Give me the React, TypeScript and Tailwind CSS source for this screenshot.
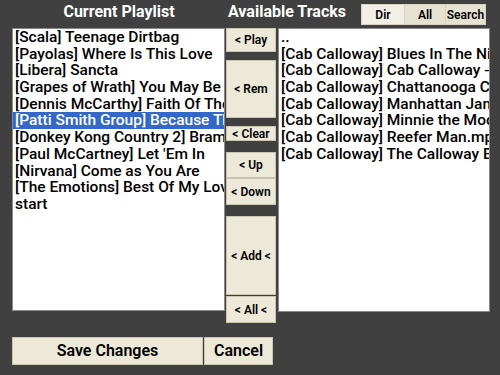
import React from "react";

const playlist = [
  "[Scala] Teenage Dirtbag",
  "[Payolas] Where Is This Love",
  "[Libera] Sancta",
  "[Grapes of Wrath] You May Be Wrong",
  "[Dennis McCarthy] Faith Of The Heart",
  "[Patti Smith Group] Because The Night",
  "[Donkey Kong Country 2] Bramble Blast",
  "[Paul McCartney] Let 'Em In",
  "[Nirvana] Come as You Are",
  "[The Emotions] Best Of My Love",
  "start",
];

const tracks = [
  "..",
  "[Cab Calloway] Blues In The Night",
  "[Cab Calloway] Cab Calloway - Jumpin Jive",
  "[Cab Calloway] Chattanooga Choo Choo",
  "[Cab Calloway] Manhattan Jam",
  "[Cab Calloway] Minnie the Moocher",
  "[Cab Calloway] Reefer Man.mp3",
  "[Cab Calloway] The Calloway Boogie",
];

const font = { fontFamily: 'Roboto, "DejaVu Sans", sans-serif' };

function SideBtn({ label, h, mt = 0 }: { label: string; h: number; mt?: number }) {
  return (
    <div
      className="w-[50px] shrink-0 flex items-center justify-center bg-[#ece9d8] border border-[#c9c5b2] text-[12px] leading-none font-semibold text-black box-border whitespace-nowrap overflow-hidden"
      style={{ height: h, marginTop: mt }}
    >
      {label}
    </div>
  );
}

export default function App() {
  return (
    <div className="w-[500px] h-[375px] bg-[#404040] overflow-hidden relative" style={font}>
      {/* header row */}
      <div className="flex h-[28px]">
        <div className="w-[226px] pl-[12px] flex items-center justify-center text-white font-bold text-[16px] pb-[4px]">
          Current Playlist
        </div>
        <div className="pl-[2px] w-[135px] flex items-center text-white font-bold text-[16px] pb-[4px] whitespace-nowrap">
          Available Tracks
        </div>
        <div className="flex mt-[4px] h-[21px] text-[12px] font-semibold text-black">
          <div className="w-[44px] flex items-center justify-center bg-[#f2f0e6] border border-[#d8d4c4]">Dir</div>
          <div className="w-[40px] flex items-center justify-center bg-[#e6e2d2] border-y border-[#d8d4c4]">All</div>
          <div className="w-[41px] flex items-center justify-center bg-[#e6e2d2] border border-[#d8d4c4]">Search</div>
        </div>
      </div>

      {/* main row */}
      <div className="flex h-[295px]">
        <div className="ml-[12px] w-[213px] h-[283px] bg-white border border-[#8a8a8a] overflow-hidden text-[15.5px] font-medium text-black leading-[16.7px]">
          {playlist.map((t, i) => (
            <div
              key={i}
              className={
                "whitespace-nowrap overflow-hidden pl-[2px] h-[16.7px] " +
                (i === 5 ? "bg-[#3468c8] text-white" : "")
              }
            >
              {t}
            </div>
          ))}
        </div>
        <div className="ml-[1px] w-[50px] flex flex-col">
          <SideBtn label="< Play" h={24} />
          <SideBtn label="< Rem" h={58} mt={8} />
          <SideBtn label="< Clear" h={15} mt={8} />
          <SideBtn label="< Up" h={26} mt={11} />
          <SideBtn label="< Down" h={27} />
          <SideBtn label="< Add <" h={79} mt={11} />
          <SideBtn label="< All <" h={27} mt={1} />
        </div>
        <div className="ml-[2px] w-[212px] h-[284px] bg-white border border-[#8a8a8a] overflow-hidden text-[15.5px] font-medium text-black leading-[16.7px]">
          {tracks.map((t, i) => (
            <div key={i} className="whitespace-nowrap overflow-hidden pl-[2px] h-[16.7px]">
              {t}
            </div>
          ))}
        </div>
      </div>

      {/* footer */}
      <div className="flex mt-[14px] h-[28px]">
        <div className="ml-[12px] w-[191px] flex items-center justify-center bg-[#ece9d8] border border-[#c9c5b2] text-[16px] font-semibold text-black">
          Save Changes
        </div>
        <div className="ml-[1px] w-[69px] flex items-center justify-center bg-[#ece9d8] border border-[#c9c5b2] text-[16px] font-semibold text-black">
          Cancel
        </div>
      </div>
    </div>
  );
}
